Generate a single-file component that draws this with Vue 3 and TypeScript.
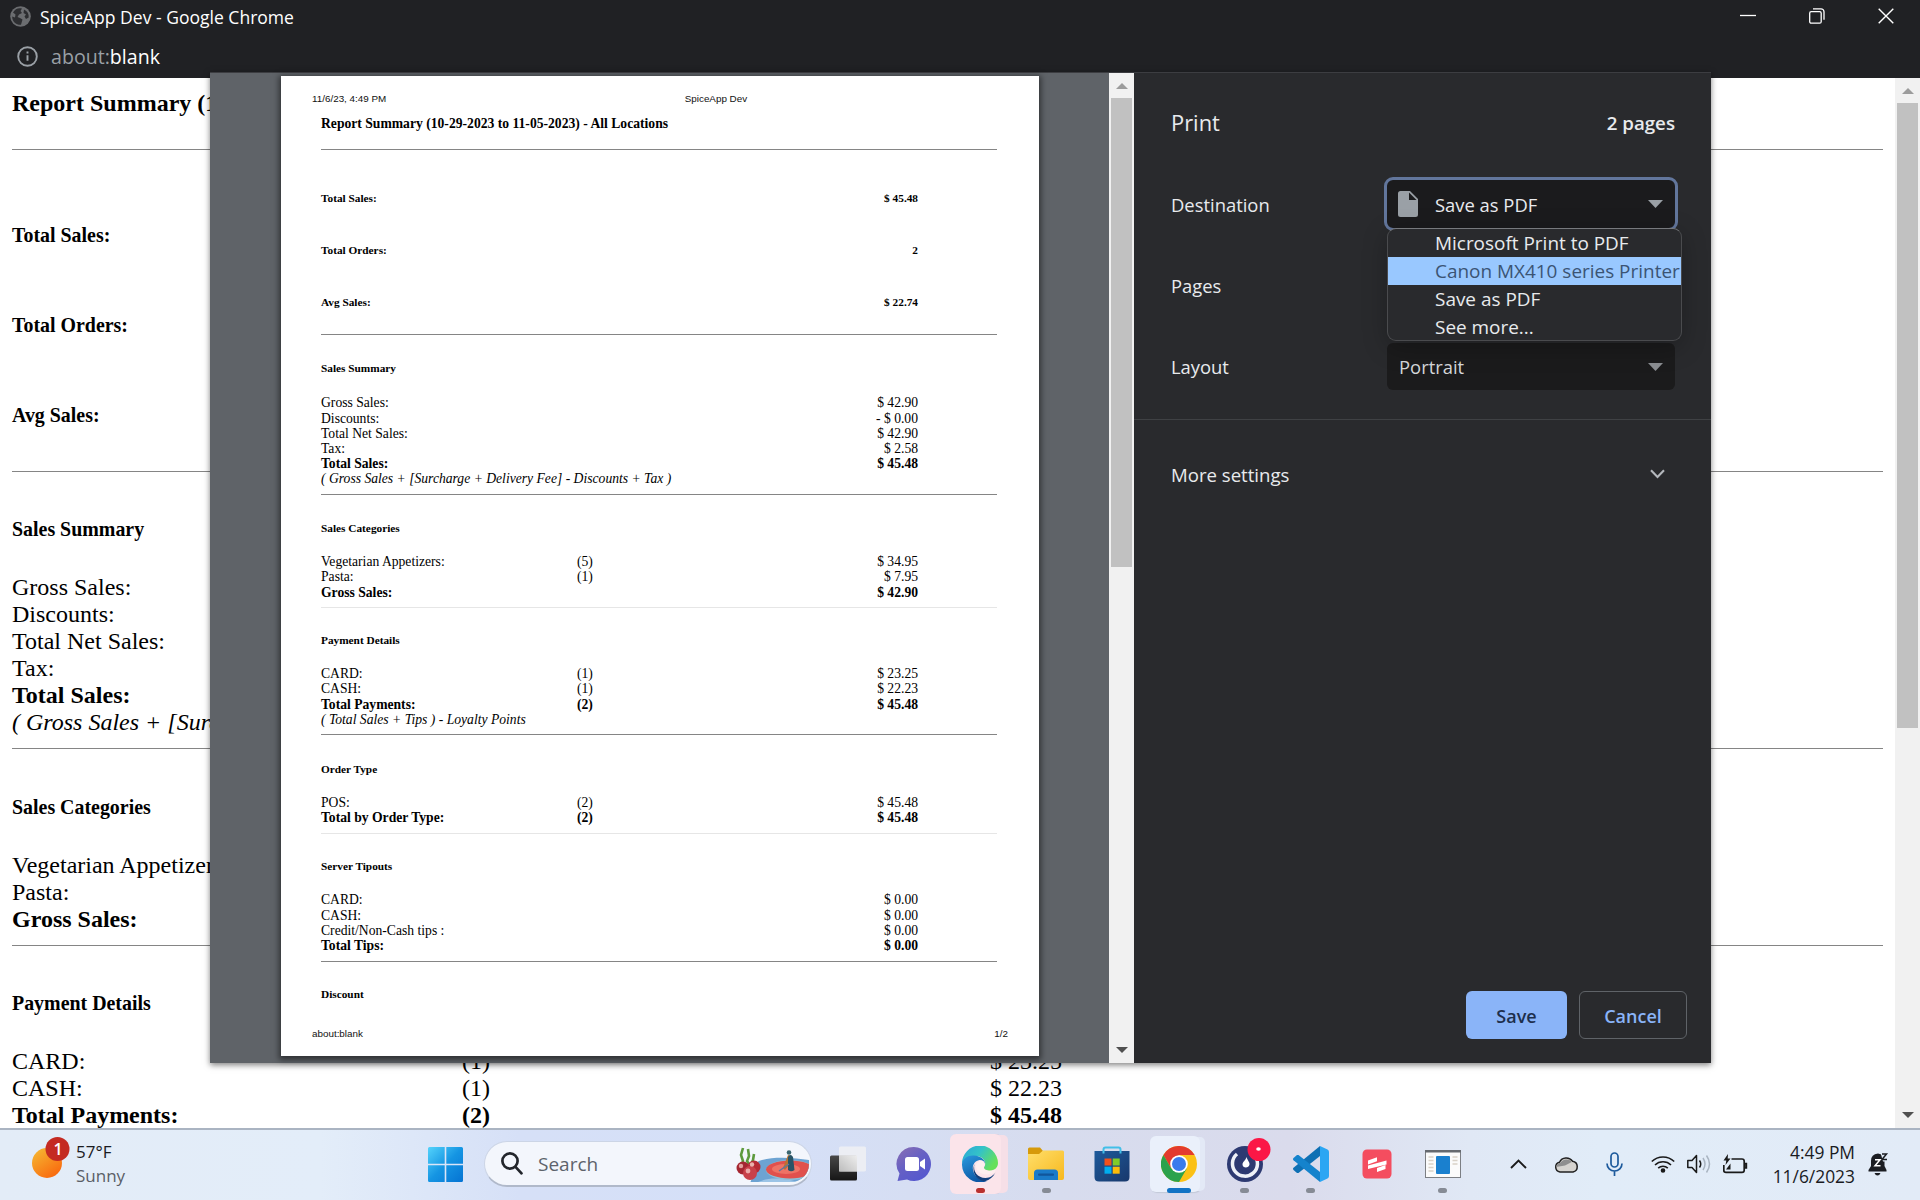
<script setup lang="ts">
interface Row {
  label: string
  count?: string
  value?: string
  kind?: 'bold' | 'note'
}
interface Section {
  title: string
  rows: Row[]
  faint?: boolean
}

const kpis: Row[] = [
  { label: 'Total Sales:', value: '$ 45.48' },
  { label: 'Total Orders:', value: '2' },
  { label: 'Avg Sales:', value: '$ 22.74' },
]

const sections: Section[] = [
  {
    title: 'Sales Summary',
    rows: [
      { label: 'Gross Sales:', value: '$ 42.90' },
      { label: 'Discounts:', value: '- $ 0.00' },
      { label: 'Total Net Sales:', value: '$ 42.90' },
      { label: 'Tax:', value: '$ 2.58' },
      { label: 'Total Sales:', value: '$ 45.48', kind: 'bold' },
      { label: '( Gross Sales + [Surcharge + Delivery Fee] - Discounts + Tax )', kind: 'note' },
    ],
  },
  {
    title: 'Sales Categories',
    faint: true,
    rows: [
      { label: 'Vegetarian Appetizers:', count: '(5)', value: '$ 34.95' },
      { label: 'Pasta:', count: '(1)', value: '$ 7.95' },
      { label: 'Gross Sales:', value: '$ 42.90', kind: 'bold' },
    ],
  },
  {
    title: 'Payment Details',
    rows: [
      { label: 'CARD:', count: '(1)', value: '$ 23.25' },
      { label: 'CASH:', count: '(1)', value: '$ 22.23' },
      { label: 'Total Payments:', count: '(2)', value: '$ 45.48', kind: 'bold' },
      { label: '( Total Sales + Tips ) - Loyalty Points', kind: 'note' },
    ],
  },
  {
    title: 'Order Type',
    faint: true,
    rows: [
      { label: 'POS:', count: '(2)', value: '$ 45.48' },
      { label: 'Total by Order Type:', count: '(2)', value: '$ 45.48', kind: 'bold' },
    ],
  },
  {
    title: 'Server Tipouts',
    rows: [
      { label: 'CARD:', value: '$ 0.00' },
      { label: 'CASH:', value: '$ 0.00' },
      { label: 'Credit/Non-Cash tips :', value: '$ 0.00' },
      { label: 'Total Tips:', value: '$ 0.00', kind: 'bold' },
    ],
  },
]

// Only the first sections fit in the window behind the dialog.
const pageSections = sections.slice(0, 3)
const heading = 'Report Summary (10-29-2023 to 11-05-2023) - All Locations'

const destinations = ['Microsoft Print to PDF', 'Canon MX410 series Printer', 'Save as PDF', 'See more...']
const activeDestination = 1
</script>

<template>
  <div class="screen">
    <header class="chrome">
      <div class="titlebar">
        <svg class="globe" width="21" height="21" viewBox="0 0 21 21">
          <circle cx="10.5" cy="10.5" r="10.3" fill="#6b6d70" />
          <path d="M3 6.5C5 2.5 9 1.5 12 2.6L10.5 5 12 7 9 8.5 7.5 11 10 12 12.5 13.5 11 18.8C6 19 2 15.500 2.200 10.500L5 11.500 5.500 8.500Z" fill="#2d2e31" />
          <path d="M14 3.500C17.500 5 19 8 18.700 11.500L16 13 14.500 10.500 16 8.500 13.500 7Z" fill="#2d2e31" />
        </svg>
        <span class="title">SpiceApp Dev - Google Chrome</span>
        <div class="controls">
          <svg width="16" height="16" viewBox="0 0 16 16"><path d="M0 7.500h16" stroke="#fff" stroke-width="1.300" /></svg>
          <svg width="16" height="16" viewBox="0 0 16 16" fill="none" stroke="#fff" stroke-width="1.300">
            <rect x=".7" y="3.700" width="11.500" height="11.500" rx="1.500" />
            <path d="M4 .8h8a3 3 0 0 1 3 3v8" />
          </svg>
          <svg width="16" height="16" viewBox="0 0 16 16"><path d="M.7.7l14.600 14.600M15.300.7.7 15.300" stroke="#fff" stroke-width="1.400" /></svg>
        </div>
      </div>
      <div class="address">
        <svg width="21" height="21" viewBox="0 0 21 21" fill="none" stroke="#9aa0a6" stroke-width="1.900">
          <circle cx="10.500" cy="10.500" r="9.300" />
          <path d="M10.500 9.200v5.600M10.500 5.500v2" />
        </svg>
        <span class="url">about:<b>blank</b></span>
      </div>
    </header>

    <main class="viewport">
      <div class="report page">
        <h3>{{ heading }}</h3>
        <hr />
        <div class="kpis">
          <div v-for="k in kpis" :key="k.label" class="kpi"><span>{{ k.label }}</span><span class="value">{{ k.value }}</span></div>
        </div>
        <hr />
        <section v-for="s in pageSections" :key="s.title">
          <h5>{{ s.title }}</h5>
          <div v-for="r in s.rows" :key="r.label" class="row" :class="r.kind">
            <span class="label">{{ r.label }}</span><span class="count">{{ r.count }}</span><span class="value">{{ r.value }}</span>
          </div>
          <hr />
        </section>
      </div>
      <div class="scrollbar">
        <svg class="up" width="12" height="6" viewBox="0 0 12 6"><path d="M6 0l6 6H0z" fill="#9c9c9c" /></svg>
        <i class="thumb"></i>
        <svg class="down" width="12" height="6" viewBox="0 0 12 6"><path d="M0 0h12L6 6z" fill="#505050" /></svg>
      </div>
    </main>

    <div class="dialog">
      <div class="preview">
        <div class="sheet">
          <div class="sheet-head"><span>11/6/23, 4:49 PM</span><span class="mid">SpiceApp Dev</span></div>
          <div class="report small">
            <h3>{{ heading }}</h3>
            <hr />
            <div class="kpis">
              <div v-for="k in kpis" :key="k.label" class="kpi"><span>{{ k.label }}</span><span class="value">{{ k.value }}</span></div>
            </div>
            <hr />
            <section v-for="s in sections" :key="s.title">
              <h5>{{ s.title }}</h5>
              <div v-for="r in s.rows" :key="r.label" class="row" :class="r.kind">
                <span class="label">{{ r.label }}</span><span class="count">{{ r.count }}</span><span class="value">{{ r.value }}</span>
              </div>
              <hr :class="{ faint: s.faint }" />
            </section>
            <h5>Discount</h5>
          </div>
          <div class="sheet-foot"><span>about:blank</span><span>1/2</span></div>
        </div>
      </div>
      <div class="scrollbar">
        <svg class="up" width="12" height="6" viewBox="0 0 12 6"><path d="M6 0l6 6H0z" fill="#9c9c9c" /></svg>
        <i class="thumb"></i>
        <svg class="down" width="12" height="6" viewBox="0 0 12 6"><path d="M0 0h12L6 6z" fill="#505050" /></svg>
      </div>
      <aside class="settings">
        <div class="head"><span class="print">Print</span><span class="pages">2 pages</span></div>
        <div class="field">
          <span>Destination</span>
          <div class="select focused">
            <svg class="doc" width="20" height="26" viewBox="0 0 20 26">
              <path d="M2.500 0H12l8 8v15.500A2.500 2.500 0 0 1 17.500 26h-15A2.500 2.500 0 0 1 0 23.500v-21A2.500 2.500 0 0 1 2.500 0z" fill="#9aa0a6" />
              <path d="M11 1.500V9h7.500z" fill="#1b1b1d" />
            </svg>
            <span>Save as PDF</span>
            <svg class="caret" width="15" height="8" viewBox="0 0 15 8"><path d="M0 0h15L7.500 8z" fill="#9aa0a6" /></svg>
            <ul class="menu">
              <li v-for="(d, i) in destinations" :key="d" :class="{ active: i === activeDestination }"><span>{{ d }}</span></li>
            </ul>
          </div>
        </div>
        <div class="field"><span>Pages</span></div>
        <div class="field">
          <span>Layout</span>
          <div class="select">
            <span>Portrait</span>
            <svg class="caret" width="15" height="8" viewBox="0 0 15 8"><path d="M0 0h15L7.500 8z" fill="#8b8e92" /></svg>
          </div>
        </div>
        <div class="more">
          <span>More settings</span>
          <svg width="15" height="10" viewBox="0 0 15 10"><path d="M1 1.300l6.500 6.700L14 1.300" fill="none" stroke="#b4b8bd" stroke-width="2.100" /></svg>
        </div>
        <div class="actions"><button class="save">Save</button><button class="cancel">Cancel</button></div>
      </aside>
    </div>

    <footer class="taskbar">
      <div class="weather">
        <svg width="38" height="42" viewBox="0 0 38 42">
          <defs><linearGradient id="sun" x1="0" y1="0" x2=".7" y2="1"><stop offset="0" stop-color="#f5bd35" /><stop offset="1" stop-color="#f9690e" /></linearGradient></defs>
          <circle cx="15" cy="26" r="15" fill="url(#sun)" />
          <circle cx="25.500" cy="12" r="12" fill="#c42b22" />
          <text x="26" y="18" text-anchor="middle" font-family="Open Sans, sans-serif" font-size="16" font-weight="600" fill="#fff">1</text>
        </svg>
        <div class="lines"><span>57°F</span><span class="dim">Sunny</span></div>
      </div>
      <div class="start">
        <svg width="35" height="35" viewBox="0 0 35 35">
          <defs><linearGradient id="win" x1="0" y1="0" x2="1" y2="1"><stop offset="0" stop-color="#54d3fb" /><stop offset=".5" stop-color="#1595e3" /><stop offset="1" stop-color="#0573d3" /></linearGradient></defs>
          <path d="M1.500 0h15.200v16.700H0V1.500Q0 0 1.500 0zM18.300 0h15.200Q35 0 35 1.500v15.200H18.300zM0 18.300h16.700V35H1.500Q0 35 0 33.500zM18.300 18.300H35v15.200q0 1.500-1.500 1.500H18.300z" fill="url(#win)" />
        </svg>
      </div>
      <div class="search">
        <svg width="22" height="23" viewBox="0 0 22 23" fill="none" stroke="#22252b" stroke-width="2.700"><circle cx="9" cy="9" r="7.600" /><path d="M14.500 14.800l6 6.500" stroke-linecap="round" /></svg>
        <span>Search</span>
        <svg class="art" width="73" height="38" viewBox="0 0 73 38">
          <defs><clipPath id="pill"><path d="M0 0h73v18a18 18 0 0 1-18 18H0z" /></clipPath></defs>
          <g clip-path="url(#pill)">
            <path d="M14 37C20 25 16 16 26 14c14-4 34-2 47 0v24H14z" fill="#6da3d2" />
            <path d="M18 38c14-8 30-6 48-1l-6 1z" fill="#9cc4e6" />
            <ellipse cx="54" cy="24" rx="24" ry="10" fill="#8ec2d8" />
            <ellipse cx="54" cy="23.500" rx="24" ry="9" fill="#e0514d" />
            <ellipse cx="50" cy="23" rx="14" ry="5" fill="#ee7365" />
            <path d="M47 22L52 9l4 1-2 8-5 6z" fill="#b97332" />
            <path d="M52 11q2.500-4 5 0l1.500 13q-3.500 2.500-6.500 0z" fill="#285467" />
            <circle cx="53" cy="6.500" r="2.300" fill="#3b6670" />
            <path d="M43 25l10-7" stroke="#5f769e" stroke-width="1.500" />
          </g>
          <path d="M7 2l-2 7 2 6-1 3M12 3l1 7-2 5 2 3M18 8l-1 6-3 6" fill="none" stroke="#5d9a3c" stroke-width="2.600" />
          <circle cx="7" cy="22" r="6.500" fill="#a52631" /><circle cx="18" cy="21" r="6.500" fill="#b62a35" /><circle cx="14" cy="27" r="7" fill="#c8414a" />
          <circle cx="5" cy="20" r="2.200" fill="#e4a09e" /><circle cx="16" cy="18.500" r="2.200" fill="#eab0ac" /><circle cx="12" cy="25" r="2.400" fill="#ecaaa9" />
        </svg>
      </div>
      <div class="apps">
        <div class="app">
          <svg width="36" height="36" viewBox="0 0 36 36">
            <defs>
              <linearGradient id="tv" x1="0" y1="0" x2="0" y2="1"><stop offset="0" stop-color="#484848" /><stop offset="1" stop-color="#161616" /></linearGradient>
              <linearGradient id="tl" x1="1" y1="0" x2="0" y2="1"><stop offset="0" stop-color="#eee" /><stop offset="1" stop-color="#bcbcbc" /></linearGradient>
            </defs>
            <rect x="0" y="9.500" width="27" height="25" rx="1.500" fill="url(#tv)" />
            <rect x="9" y="0.500" width="27" height="25" rx="1.500" fill="#f1f1f4" opacity=".8" />
            <rect x="9" y="9.500" width="18" height="16" fill="url(#tl)" />
          </svg>
        </div>
        <div class="app">
          <svg width="36" height="36" viewBox="0 0 36 36">
            <defs><linearGradient id="chat" x1="0" y1="0" x2=".7" y2="1"><stop offset="0" stop-color="#8b6fb2" /><stop offset=".5" stop-color="#6660c4" /><stop offset="1" stop-color="#5558cf" /></linearGradient></defs>
            <path d="M18 1a17 17 0 1 1-7 32.500L1.500 35l2-7.500A17 17 0 0 1 18 1z" fill="url(#chat)" />
            <rect x="9" y="11" width="14" height="14" rx="2.500" fill="#fff" />
            <path d="M24 16l5-3.500v11L24 20z" fill="#fff" />
          </svg>
        </div>
        <div class="app alert">
          <svg width="36" height="36" viewBox="0 0 36 36">
            <defs>
              <linearGradient id="e1" x1="0" y1="0" x2="1" y2=".5"><stop offset="0" stop-color="#2aa5d8" /><stop offset=".5" stop-color="#34c2c8" /><stop offset="1" stop-color="#66e05a" /></linearGradient>
              <linearGradient id="e2" x1="0" y1="0" x2=".5" y2="1"><stop offset="0" stop-color="#2a9ade" /><stop offset="1" stop-color="#0d57a5" /></linearGradient>
            </defs>
            <path d="M0 18A18 18 0 0 1 36 17c0 5-4 7.500-8 7.500-3.500 0-6-1.200-6-2.800 0-1 1.200-1.400 1.200-4C23 13 19 10 13 10 7 10 2 13 0 18z" fill="url(#e1)" />
            <path d="M0 18C1 12 6 9 12 9.500c7 .5 11 4 11 8.500-1-3-3.500-4-5.500-4C12 15 9 21 12 27c2 5 8 8 13 8A18 18 0 0 1 0 18z" fill="url(#e2)" />
            <path d="M12.500 18c-2 7 3 14 11 14 5 0 8-3 10-5.500A18 18 0 0 1 23 35.300C15 35 9 26 12.500 18z" fill="#123f7c" />
            <path d="M14 19c1-3 4-5 6-4.500 2 .4 3 2.500 2.600 4.500-1 2-1.600 3.500.8 5 3 1.500 7 1 10.200-.8-.2 1.500-.6 2.500-1.200 3.300C24 31 13 27 14 19z" fill="#fdeeef" />
          </svg>
          <i class="dot red"></i>
        </div>
        <div class="app">
          <svg width="36" height="36" viewBox="0 0 36 36">
            <defs><linearGradient id="fx" x1="0" y1="0" x2="1" y2="1"><stop offset="0" stop-color="#ffdf6b" /><stop offset="1" stop-color="#f7b81e" /></linearGradient></defs>
            <path d="M0 3q0-1.500 1.500-1.500H12l3 3.500v6H0z" fill="#d69a0a" />
            <path d="M0 8h11l4-3.500h19.500q1.500 0 1.500 1.500v26q0 2-2 2H2q-2 0-2-2z" fill="url(#fx)" />
            <path d="M6 34V27q0-3.500 3.500-3.500h17q3.500 0 3.500 3.500v7z" fill="#1a7bc9" />
            <rect x="10" y="27.500" width="16" height="2.200" rx="1" fill="#11569b" />
          </svg>
          <i class="dot"></i>
        </div>
        <div class="app">
          <svg width="36" height="36" viewBox="0 0 36 36">
            <defs><linearGradient id="st" x1="0" y1="0" x2="1" y2="1"><stop offset="0" stop-color="#1d5a9b" /><stop offset="1" stop-color="#19386c" /></linearGradient></defs>
            <path d="M.5 5h35v26q0 4.500-4.500 4.500H5Q.5 35.500.5 31z" fill="url(#st)" />
            <path d="M9.500 7.500V3.500q0-2 2-2h13q2 0 2 2v4" fill="none" stroke="#42bfe8" stroke-width="2" />
            <path d="M10.500 12.500h7v7h-7z" fill="#f1511b" /><path d="M18.700 12.500h7v7h-7z" fill="#80cc28" /><path d="M10.500 20.700h7v7h-7z" fill="#00adef" /><path d="M18.700 20.700h7v7h-7z" fill="#fbbc09" />
          </svg>
        </div>
        <div class="app current">
          <svg width="36" height="36" viewBox="0 0 36 36">
            <circle cx="18" cy="18" r="18" fill="#fbc116" />
            <path d="M18 9h15.600A18 18 0 0 0 2.400 9l7.800 13.500z" fill="#e33b2e" />
            <path d="M2.400 9A18 18 0 0 0 18 36l7.800-13.500L18 25 10.200 22.500z" fill="#2ba24c" />
            <circle cx="18" cy="18" r="8.800" fill="#fff" /><circle cx="18" cy="18" r="7" fill="#3a7bec" />
          </svg>
          <i class="dot blue"></i>
        </div>
        <div class="app">
          <svg width="44" height="44" viewBox="0 0 44 44" class="wide">
            <circle cx="18" cy="26" r="18" fill="#2d3a72" />
            <path d="M10 16a12.500 12.500 0 1 0 17 1" fill="none" stroke="#eef1f8" stroke-width="3.500" />
            <path d="M20 15c-4 4-9 6-9 11a7.500 7.500 0 0 0 15 0C26 22 20 20 20 15z" fill="#2d3a72" />
            <path d="M19.500 19c-1 4-4 4.500-4 7.500 0 4 6.500 4 7 0 .3-2.500-2-4-3-7.500z" fill="#fff" />
            <circle cx="32" cy="11.500" r="11.500" fill="#fb1746" /><ellipse cx="31.500" cy="11" rx="2.300" ry="1.800" fill="#fff" />
          </svg>
          <i class="dot"></i>
        </div>
        <div class="app">
          <svg width="36" height="36" viewBox="0 0 36 36">
            <path d="M27 0v10L5.500 27 4 27 .5 24q-1-1.200 0-2.300z" fill="#0e70b4" />
            <path d="M27 36V26L5.500 9H4L.5 12q-1 1.200 0 2.300z" fill="#1583cc" />
            <path d="M27 0l7.500 3.500Q36 4.200 36 6v24q0 1.800-1.500 2.500L27 36z" fill="#2ba6f3" />
          </svg>
          <i class="dot"></i>
        </div>
        <div class="app">
          <svg width="36" height="36" viewBox="0 0 36 36">
            <rect x="3.500" y="3.500" width="29" height="29" rx="4.500" fill="#f44d5f" />
            <path d="M9 14.500l9-3.300v4l-9 3.300zM9 19.500l18.500-5v4L9 23zM18 22l8.500-3v4L18 26z" fill="#fff" />
          </svg>
        </div>
        <div class="app">
          <svg width="36" height="36" viewBox="0 0 36 36">
            <rect x=".5" y="4.500" width="35" height="27" fill="#fbfbfb" stroke="#7c7f84" />
            <path d="M0 4h36v2.500H0z" fill="#666a70" />
            <path d="M3.500 11h5M3.500 14.500h5M3.500 18h5M3.500 21.500h5M3.500 25h5M27.500 11h5M27.500 14.500h5M27.500 18h5" stroke="#d9d2c8" stroke-width="1.500" />
            <rect x="11" y="10" width="14" height="18" rx="1" fill="#1a80cf" />
          </svg>
          <i class="dot"></i>
        </div>
      </div>
      <div class="tray">
        <svg width="17" height="10" viewBox="0 0 17 10"><path d="M1 9l7.500-7.500L16 9" fill="none" stroke="#1a1a1a" stroke-width="1.900" /></svg>
        <svg class="cloud" width="25" height="17" viewBox="0 0 25 17">
          <path d="M6 16a5 5 0 0 1-.5-9.800A7.500 7.500 0 0 1 18.500 5.200 5.500 5.500 0 0 1 19 16z" fill="#d6d4d0" stroke="#222" stroke-width="1.500" />
          <path d="M2 11q1-4 4.500-4.300A7 7 0 0 1 17.800 6L11 9.500z" fill="#8f8f8f" />
        </svg>
        <svg class="mic" width="17" height="24" viewBox="0 0 17 24" fill="none" stroke="#1d5a9c" stroke-width="1.700"><rect x="5" y="1" width="7" height="14" rx="3.500" /><path d="M1 11.500a7.500 7.500 0 0 0 15 0M8.500 19v5" /></svg>
        <svg class="wifi" width="24" height="18" viewBox="0 0 24 18" fill="none" stroke="#1a1a1a" stroke-width="1.600">
          <path d="M.8 6.500a16 16 0 0 1 22.400 0M4 10a11.500 11.500 0 0 1 16 0M7.200 13.200a7 7 0 0 1 9.600 0" /><circle cx="12" cy="15.500" r="1.500" fill="#1a1a1a" />
        </svg>
        <svg class="speaker" width="25" height="20" viewBox="0 0 25 20" fill="none" stroke="#1a1a1a" stroke-width="1.500">
          <path d="M.8 6.500H5l4.500-5v17L5 13.500H.8z" stroke-linejoin="round" /><path d="M12.500 6.500q2.500 3.500 0 7" /><path d="M16 4q4 6 0 12M19.500 1.500q6 8.500 0 17" stroke="#a9b4c1" />
        </svg>
        <svg class="battery" width="25" height="20" viewBox="0 0 25 20" fill="none" stroke="#1a1a1a" stroke-width="1.700">
          <path d="M8.500 5h10.500q2.200 0 2.200 2.200v9q0 2.200-2.200 2.200H3q-2.200 0-2.200-2.200V11" /><path d="M22 9.500v4.500h1.500V9.500z" stroke-width="1.400" /><path d="M5 0L.5 6.500h2.800L2.500 11 7.500 4.500H4.700z" fill="#1a1a1a" stroke="none" /><path d="M3 15.500l4.500-6v6z" fill="#1a1a1a" stroke="none" />
        </svg>
        <div class="lines clock"><span>4:49 PM</span><span>11/6/2023</span></div>
        <svg class="bell" width="21" height="24" viewBox="0 0 21 24">
          <path d="M10 1.500q-7 .5-7 7.500v5L.5 18v1.500h18V18L16.500 14V9Q16 2 10 1.500z" fill="#1b1d22" /><path d="M6.500 21h6q-1 2.500-3 2.500T6.500 21z" fill="#1b1d22" />
          <path d="M12.500.5h7.500v9h-5z" fill="#e1ebf7" />
          <path d="M14 2h4.500L14 7.500h5" fill="none" stroke="#1b1d22" stroke-width="1.500" />
          <path d="M7 7.700h5l-5 6h5.500" fill="none" stroke="#fff" stroke-width="1.500" />
        </svg>
      </div>
    </footer>
  </div>
</template>

<style>
html,
body {
  margin: 0;
  overflow: hidden;
}
</style>

<style scoped>
.screen {
  position: relative;
  width: 1920px;
  height: 1200px;
  display: flex;
  flex-direction: column;
  overflow: hidden;
  background: #fff;
  font-family: "Open Sans", "Noto Sans", sans-serif;
}
svg {
  display: block;
  flex: none;
}

/* window chrome */
.chrome {
  height: 78px;
  flex: none;
  background: #202124;
  color: #fff;
}
.titlebar {
  height: 36px;
  display: flex;
  align-items: center;
  padding-left: 10px;
}
.globe {
  margin-top: -4px;
}
.title {
  margin: -2px 0 0 9px;
  font-size: 17.55px;
  line-height: 36px;
}
.controls {
  margin: -5px 26px 0 auto;
  display: flex;
  gap: 53px;
}
.address {
  height: 42px;
  display: flex;
  align-items: center;
  padding-left: 17px;
}
.address svg {
  margin-top: -1px;
}
.url {
  margin: -2px 0 0 13px;
  font-size: 19.6px;
  color: #9aa0a6;
}
.url b {
  font-weight: 400;
  color: #fff;
}

/* report */
.viewport {
  height: 1050px;
  flex: none;
  display: flex;
  overflow: hidden;
}
.report {
  font-family: "Liberation Serif", "Times New Roman", serif;
  color: #000;
}
.report h3,
.report h5 {
  margin: 0;
  font-weight: 700;
  white-space: nowrap;
}
.report hr {
  height: 1px;
  margin: 0;
  border: 0;
  background: #858585;
}
.report hr.faint {
  background: #e6e6e6;
}
.kpi,
.row {
  display: flex;
  white-space: nowrap;
}
.kpi {
  justify-content: space-between;
  font-weight: 700;
}
.row.bold {
  font-weight: 700;
}
.row.note {
  font-style: italic;
}
.label,
.count {
  flex: none;
}
.row .value {
  flex: 1;
  text-align: right;
}

.page {
  width: 1871px;
  flex: none;
  padding: 12px 12px 0;
  font-size: 24px;
}
.page h3 {
  font-size: 24px;
  line-height: 27px;
}
.page h3 + hr {
  margin-top: 32px;
}
.page .kpis {
  padding: 73.500px 821px 44.500px 0;
  display: flex;
  flex-direction: column;
  gap: 67px;
}
.page .kpi,
.page h5 {
  font-size: 19.92px;
  line-height: 23px;
}
.page h5 {
  padding: 46.400px 0 33px;
}
.page .row {
  line-height: 27px;
  padding-right: 821px;
}
.page .label {
  width: 450px;
}
.page section hr {
  margin-top: 12px;
}

/* scrollbars */
.scrollbar {
  width: 25px;
  flex: none;
  display: flex;
  flex-direction: column;
  align-items: center;
  background: #f1f1f1;
}
.scrollbar .up {
  margin: 10px 0 9px;
}
.scrollbar .thumb {
  width: 21px;
  background: #c1c1c1;
}
.scrollbar .down {
  margin: auto 0 10px;
}
.viewport .thumb {
  height: 625px;
}
.dialog .thumb {
  height: 469px;
}

/* print dialog */
.dialog {
  position: absolute;
  left: 210px;
  top: 72px;
  width: 1501px;
  height: 991px;
  box-sizing: border-box;
  border-top: 1px solid #3c3d41;
  display: flex;
  background: #292a2d;
  box-shadow: 0 2px 6px rgba(0, 0, 0, 0.5);
}
.preview {
  width: 899px;
  flex: none;
  display: flex;
  background: #5f6368;
}
.sheet {
  width: 758px;
  height: 980px;
  margin: 3px 0 0 71px;
  display: flex;
  flex-direction: column;
  background: #fff;
  box-shadow: 0 2px 6px 2px rgba(0, 0, 0, 0.5);
}
.sheet-head,
.sheet-foot {
  display: flex;
  padding: 0 31px;
  font-family: "Liberation Sans", Arial, sans-serif;
  font-size: 9.85px;
  line-height: 12px;
  color: #111;
}
.sheet-head {
  padding-top: 17px;
}
.sheet-head .mid {
  margin-left: 298.500px;
}
.sheet-foot {
  margin-top: auto;
  padding-bottom: 16px;
  justify-content: space-between;
}
.small {
  padding: 11px 42px 0 40px;
  font-size: 13.64px;
}
.small h3 {
  font-size: 13.64px;
  line-height: 15px;
}
.small h3 + hr {
  margin-top: 18px;
}
.small .kpis {
  padding: 42px 79px 25px 0;
  display: flex;
  flex-direction: column;
  gap: 39px;
}
.small .kpi,
.small h5 {
  font-size: 11.3px;
  line-height: 13px;
}
.small h5 {
  padding: 26.800px 0 19.500px;
}
.small section:nth-of-type(1) h5 {
  padding-bottom: 20.700px;
}
.small section:nth-of-type(3) h5 {
  padding-top: 25.600px;
}
.small section:nth-of-type(4) h5 {
  padding-top: 27.500px;
}
.small section:nth-of-type(5) h5 {
  padding-top: 26.100px;
}
.small .row {
  line-height: 15.18px;
  padding-right: 79px;
}
.small .label {
  width: 256px;
}
.small section hr {
  margin-top: 7.300px;
}

.settings {
  flex: 1;
  display: flex;
  flex-direction: column;
  color: #e8eaed;
  font-size: 18.4px;
}
.head {
  height: 91px;
  padding: 7px 36px 0 37px;
  box-sizing: border-box;
  display: flex;
  align-items: center;
  justify-content: space-between;
}
.print {
  font-size: 21.9px;
}
.pages {
  font-weight: 600;
  font-size: 18.7px;
}
.field {
  height: 81px;
  flex: none;
  display: flex;
  align-items: center;
  justify-content: space-between;
  padding: 0 36px 0 37px;
}
.select {
  position: relative;
  width: 288px;
  height: 47px;
  display: flex;
  align-items: center;
  box-sizing: border-box;
  padding: 0 12px;
  border-radius: 6px;
  background: #1b1b1c;
  color: #d5d7da;
}
.select.focused {
  z-index: 2;
  height: 48px;
  margin-top: -1px;
  outline: 3px solid #62769c;
  padding-left: 11px;
  background: #1b1b1d;
  color: #e8eaed;
}
.doc {
  margin-right: 17px;
}
.caret {
  margin-left: auto;
}
.menu {
  position: absolute;
  left: 0;
  top: 48px;
  width: 295px;
  height: 113px;
  box-sizing: border-box;
  margin: 0;
  padding: 0;
  list-style: none;
  overflow: hidden;
  border: 1px solid #4a4b4e;
  border-top-color: #77797d;
  border-radius: 9px;
  background: #292a2d;
  font-size: 18.95px;
  box-shadow: 0 6px 24px rgba(0, 0, 0, 0.25);
}
.menu li {
  height: 28px;
  box-sizing: border-box;
  padding: 1px 0 0 47px;
  line-height: 27px;
  white-space: nowrap;
}
.menu li.active {
  background: #99c8ff;
  color: #3b5474;
}
.more {
  height: 108px;
  margin-top: 12px;
  padding: 0 46px 0 37px;
  border-top: 1px solid #3f4144;
  display: flex;
  align-items: center;
  justify-content: space-between;
  font-size: 18.6px;
}
.actions {
  margin-top: auto;
  padding: 0 24px 24px 0;
  display: flex;
  justify-content: flex-end;
  gap: 12px;
}
.actions button {
  height: 48px;
  padding: 1px 0 0;
  box-sizing: border-box;
  border: 0;
  border-radius: 6px;
  font: 600 18px "Open Sans", sans-serif;
}
.actions .save {
  width: 101px;
  background: #8ab4f8;
  color: #1d2f4d;
}
.actions .cancel {
  width: 108px;
  border: 1px solid #5f6368;
  background: transparent;
  color: #8ab4f8;
}

/* taskbar */
.taskbar {
  height: 72px;
  flex: none;
  box-sizing: border-box;
  border-top: 2px solid #aab4c2;
  display: flex;
  background: linear-gradient(90deg, #e3ecf7 0, #e3edf9 320px, #d6e0f7 520px, #d5e0f8 760px, #d7dcee 1060px, #dadbec 1290px, #e0e8f5 1470px, #e1ecf8 1600px, #e2ebf7 100%);
}
.weather {
  width: 428px;
  flex: none;
  box-sizing: border-box;
  padding: 7px 0 0 32px;
  display: flex;
}
.lines {
  display: flex;
  flex-direction: column;
  font-size: 17px;
  line-height: 24px;
  color: #1a1b1f;
  white-space: nowrap;
}
.weather .lines {
  margin: 3px 0 0 6px;
}
.weather .dim {
  color: #5a5e66;
}
.start {
  padding-top: 17px;
}
.search {
  width: 328px;
  height: 46px;
  margin: 11px 0 0 21px;
  box-sizing: border-box;
  display: flex;
  align-items: center;
  padding-left: 16px;
  border-radius: 23px;
  border: 1px solid #ccd5e6;
  border-bottom: 2px solid #b0b9ca;
  background: #f3f6fc;
  color: #5d626b;
  font-size: 19px;
}
.search span {
  margin-left: 15px;
}
.art {
  margin: 2px 2px 0 auto;
}
.apps {
  display: flex;
  margin-left: 3px;
}
.app {
  position: relative;
  width: 66.100px;
  display: flex;
  justify-content: center;
  padding-top: 16px;
  box-sizing: border-box;
}
.app svg {
  position: relative;
}
.wide {
  margin: -8px 0 0 8px;
}
.alert::before,
.current::before {
  content: "";
  position: absolute;
  left: 3px;
  top: 4px;
  width: 51px;
  height: 60px;
  border-radius: 6px;
  background: #fbe4ea;
  box-shadow: 8px 0 0 -1px #f6dfe7, 1px 0 0 #d5c7d8;
}
.current::before {
  top: 6px;
  left: 5px;
  width: 50px;
  height: 56px;
  background: #eaf0fb;
  box-shadow: 6px 0 0 -1px #e3e9f6, 1px 1px 1px #c3c9d8;
}
.dot {
  position: absolute;
  left: 50%;
  top: 58px;
  width: 9px;
  height: 5px;
  margin-left: -4.500px;
  border-radius: 3px;
  background: #868b95;
}
.dot.red {
  background: #b9302f;
}
.dot.blue {
  width: 24px;
  margin-left: -12px;
  background: #1273c5;
}
.tray {
  margin-left: auto;
  margin-right: 31px;
  display: flex;
  align-items: center;
  padding-bottom: 2px;
}
.cloud {
  margin-left: 27px;
}
.mic {
  margin-left: 27px;
}
.wifi {
  margin-left: 28px;
}
.speaker {
  margin-left: 12px;
}
.battery {
  margin-left: 11px;
}
.clock {
  width: 107px;
  text-align: right;
  font-size: 17.400px;
}
.bell {
  margin-left: 13px;
}
</style>
